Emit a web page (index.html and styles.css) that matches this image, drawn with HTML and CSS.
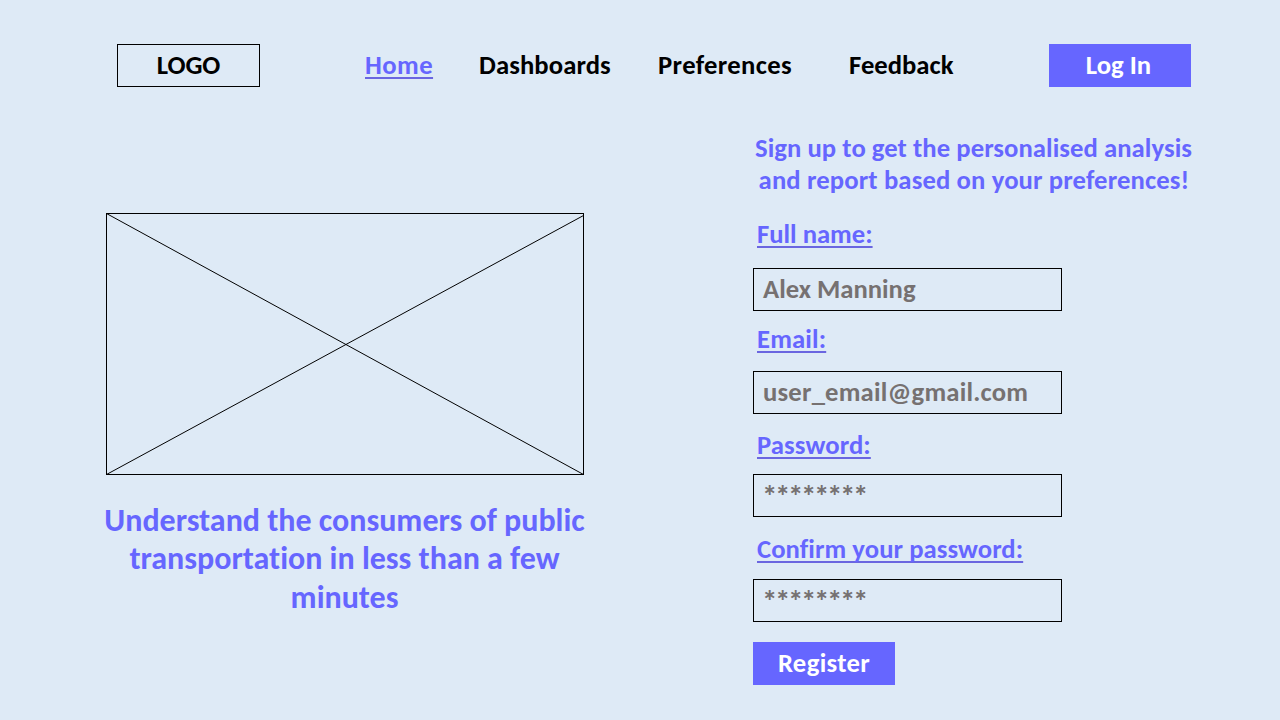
FILE: index.html
```html
<!DOCTYPE html>
<html lang="en">
<head>
<meta charset="utf-8">
<title>Sign up</title>
<link rel="stylesheet" href="styles.css">
</head>
<body>
<header class="header">
  <div class="logo">LOGO</div>
  <nav class="nav">
    <a class="nav-home">Home</a>
    <a class="nav-dashboards">Dashboards</a>
    <a class="nav-preferences">Preferences</a>
    <a class="nav-feedback">Feedback</a>
  </nav>
  <div class="button login">Log In</div>
</header>
<main class="main">
  <section class="hero">
    <svg class="placeholder" viewBox="0 0 478 262">
      <rect x="0.5" y="0.5" width="477" height="261" shape-rendering="crispEdges"/>
      <path d="M0.5 0.5L477.5 261.5M0.5 261.5L477.5 2.5"/>
    </svg>
    <h1 class="tagline">
      <span class="tag-first">Understand the consumers of public</span>
      <span class="tag-second">transportation in less than a few</span>
      <span class="tag-third">minutes</span>
    </h1>
  </section>
  <form class="form">
    <p class="intro">
      <span class="intro-first">Sign up to get the personalised analysis</span>
      <span class="intro-second">and report based on your preferences!</span>
    </p>
    <div class="label label-name"><span>Full name:</span></div>
    <div class="field field-name">Alex Manning</div>
    <div class="label label-email"><span>Email:</span></div>
    <div class="field field-email">user_email@gmail.com</div>
    <div class="label label-password"><span>Password:</span></div>
    <div class="field field-password">********</div>
    <div class="label label-confirm"><span>Confirm your password:</span></div>
    <div class="field field-password">********</div>
    <div class="button register">Register</div>
  </form>
</main>
</body>
</html>
```
FILE: styles.css
```css
* { box-sizing: border-box; }
body {
  margin: 0;
  width: 1280px;
  height: 720px;
  overflow: hidden;
  background: #deeaf6;
  color: #000;
  font: 700 26.67px/32px Calibri, Carlito, Lato, sans-serif;
  font-variant-ligatures: none;
  white-space: nowrap;
}
.header {
  display: flex;
  height: 87px;
  padding: 44px 89px 0 117px;
}
.logo {
  width: 143px;
  height: 43px;
  border: 1px solid #000;
  line-height: 41px;
  text-align: center;
  letter-spacing: -0.1px;
}
.nav {
  display: flex;
  flex: 1;
  padding-left: 105px;
  line-height: 43px;
}
.nav-home {
  margin-right: 46px;
  color: #6666ff;
  text-decoration: underline 2px #6a66e0;
  text-underline-offset: 3px;
  letter-spacing: 0.45px;
}
.nav-dashboards { width: 179px; letter-spacing: 0.1px; }
.nav-preferences { width: 191px; letter-spacing: 0.35px; }
.button {
  width: 142px;
  height: 43px;
  background: #6666ff;
  color: #fff;
  line-height: 43px;
  text-align: center;
}
.login { padding-right: 3px; }
.main {
  display: flex;
  justify-content: space-between;
  padding: 45px 86px 0 104px;
}
.hero { width: 481px; padding-top: 81px; }
.placeholder {
  display: block;
  width: 478px;
  height: 262px;
  margin-left: 2px;
  fill: none;
  stroke: #000;
  stroke-width: 1;
}
.tagline {
  display: flex;
  flex-direction: column;
  align-items: center;
  margin: 27px 0 0;
  color: #6666ff;
  font-size: 32px;
  line-height: 38.4px;
}
.form { width: 441px; }
.intro {
  display: flex;
  flex-direction: column;
  align-items: center;
  margin: 0 0 22px;
  color: #6666ff;
}
.intro-first { letter-spacing: 0.07px; }
.intro-second { padding-left: 1px; letter-spacing: 0.14px; }
.label {
  height: 32px;
  padding-left: 4px;
  color: #6666ff;
  text-decoration: underline 2px #6a66e0;
  text-underline-offset: 3px;
  text-decoration-skip-ink: none;
}
.label-name { margin-bottom: 18px; }
.label-email { margin: 12px 0 16px; letter-spacing: 0.15px; }
.label-password { margin: 15px 0 13px; letter-spacing: 0.12px; }
.label-confirm { margin: 16px 0 14px; letter-spacing: 0.07px; }
.field {
  width: 309px;
  height: 43px;
  padding-left: 9px;
  border: 1px solid #000;
  color: #767171;
  line-height: 41px;
}
.field-email { letter-spacing: 0.2px; }
.field-password {
  padding-left: 8px;
  font-size: 31px;
  line-height: 40px;
  letter-spacing: -2.45px;
}
.register { margin-top: 20px; letter-spacing: 0.35px; }
```
